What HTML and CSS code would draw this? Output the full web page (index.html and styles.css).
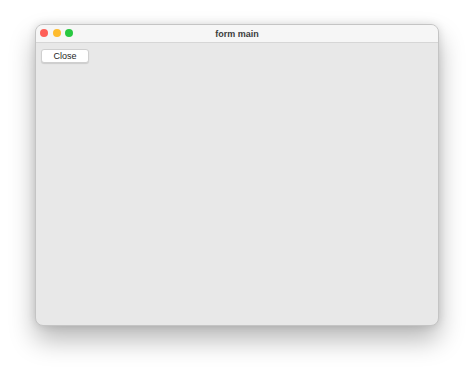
FILE: index.html
```html
<!doctype html>
<html lang="en">
<head>
    <meta charset="UTF-8">
    <title>form main</title>
    <link rel="stylesheet" href="styles.css">
</head>
<body>
<div class="window">
    <div class="titleBar">
        <div class="lights">
            <span class="light red"></span>
            <span class="light yellow"></span>
            <span class="light green"></span>
        </div>
        <div class="title">form main</div>
    </div>
    <div class="content">
        <button class="btn">Close</button>
    </div>
</div>
</body>
</html>
```

FILE: styles.css
```css
* {
    padding: 0;
    margin: 0;
    box-sizing: border-box;
}

body {
    width: 474px;
    height: 373px;
    background-color: #fff;
    padding: 24px 35px 0;
    font-family: "Liberation Sans", Arial, sans-serif;
}

.window {
    width: 404px;
    height: 302px;
    border-radius: 8px;
    background-color: #e8e8e8;
    border: 1px solid #c4c4c4;
    box-shadow: 0 14px 26px rgba(0, 0, 0, .28), 0 0 8px rgba(0, 0, 0, .12);
    overflow: hidden;
    display: flex;
    flex-direction: column;
}

.titleBar {
    position: relative;
    height: 18px;
    background-color: #f6f6f6;
    border-bottom: 1px solid #d6d6d6;
    display: flex;
    align-items: center;
    justify-content: center;
}

.lights {
    position: absolute;
    left: 4px;
    top: 4px;
    display: flex;
    gap: 4.5px;
}

.light {
    width: 8px;
    height: 8px;
    border-radius: 50%;
}

.red {
    background-color: #fe5f57;
}

.yellow {
    background-color: #febc2e;
}

.green {
    background-color: #28c840;
}

.title {
    font-size: 9px;
    font-weight: bold;
    color: #3c3c3c;
}

.content {
    flex: 1;
    padding: 6px 5px;
}

.btn {
    display: block;
    width: 48px;
    height: 14px;
    background-color: #fff;
    border: 1px solid #cfcfcf;
    border-radius: 3px;
    box-shadow: 0 1px 1px rgba(0, 0, 0, .12);
    font-family: "Liberation Sans", Arial, sans-serif;
    font-size: 9px;
    color: #1e1e1e;
    line-height: 12px;
}
```
